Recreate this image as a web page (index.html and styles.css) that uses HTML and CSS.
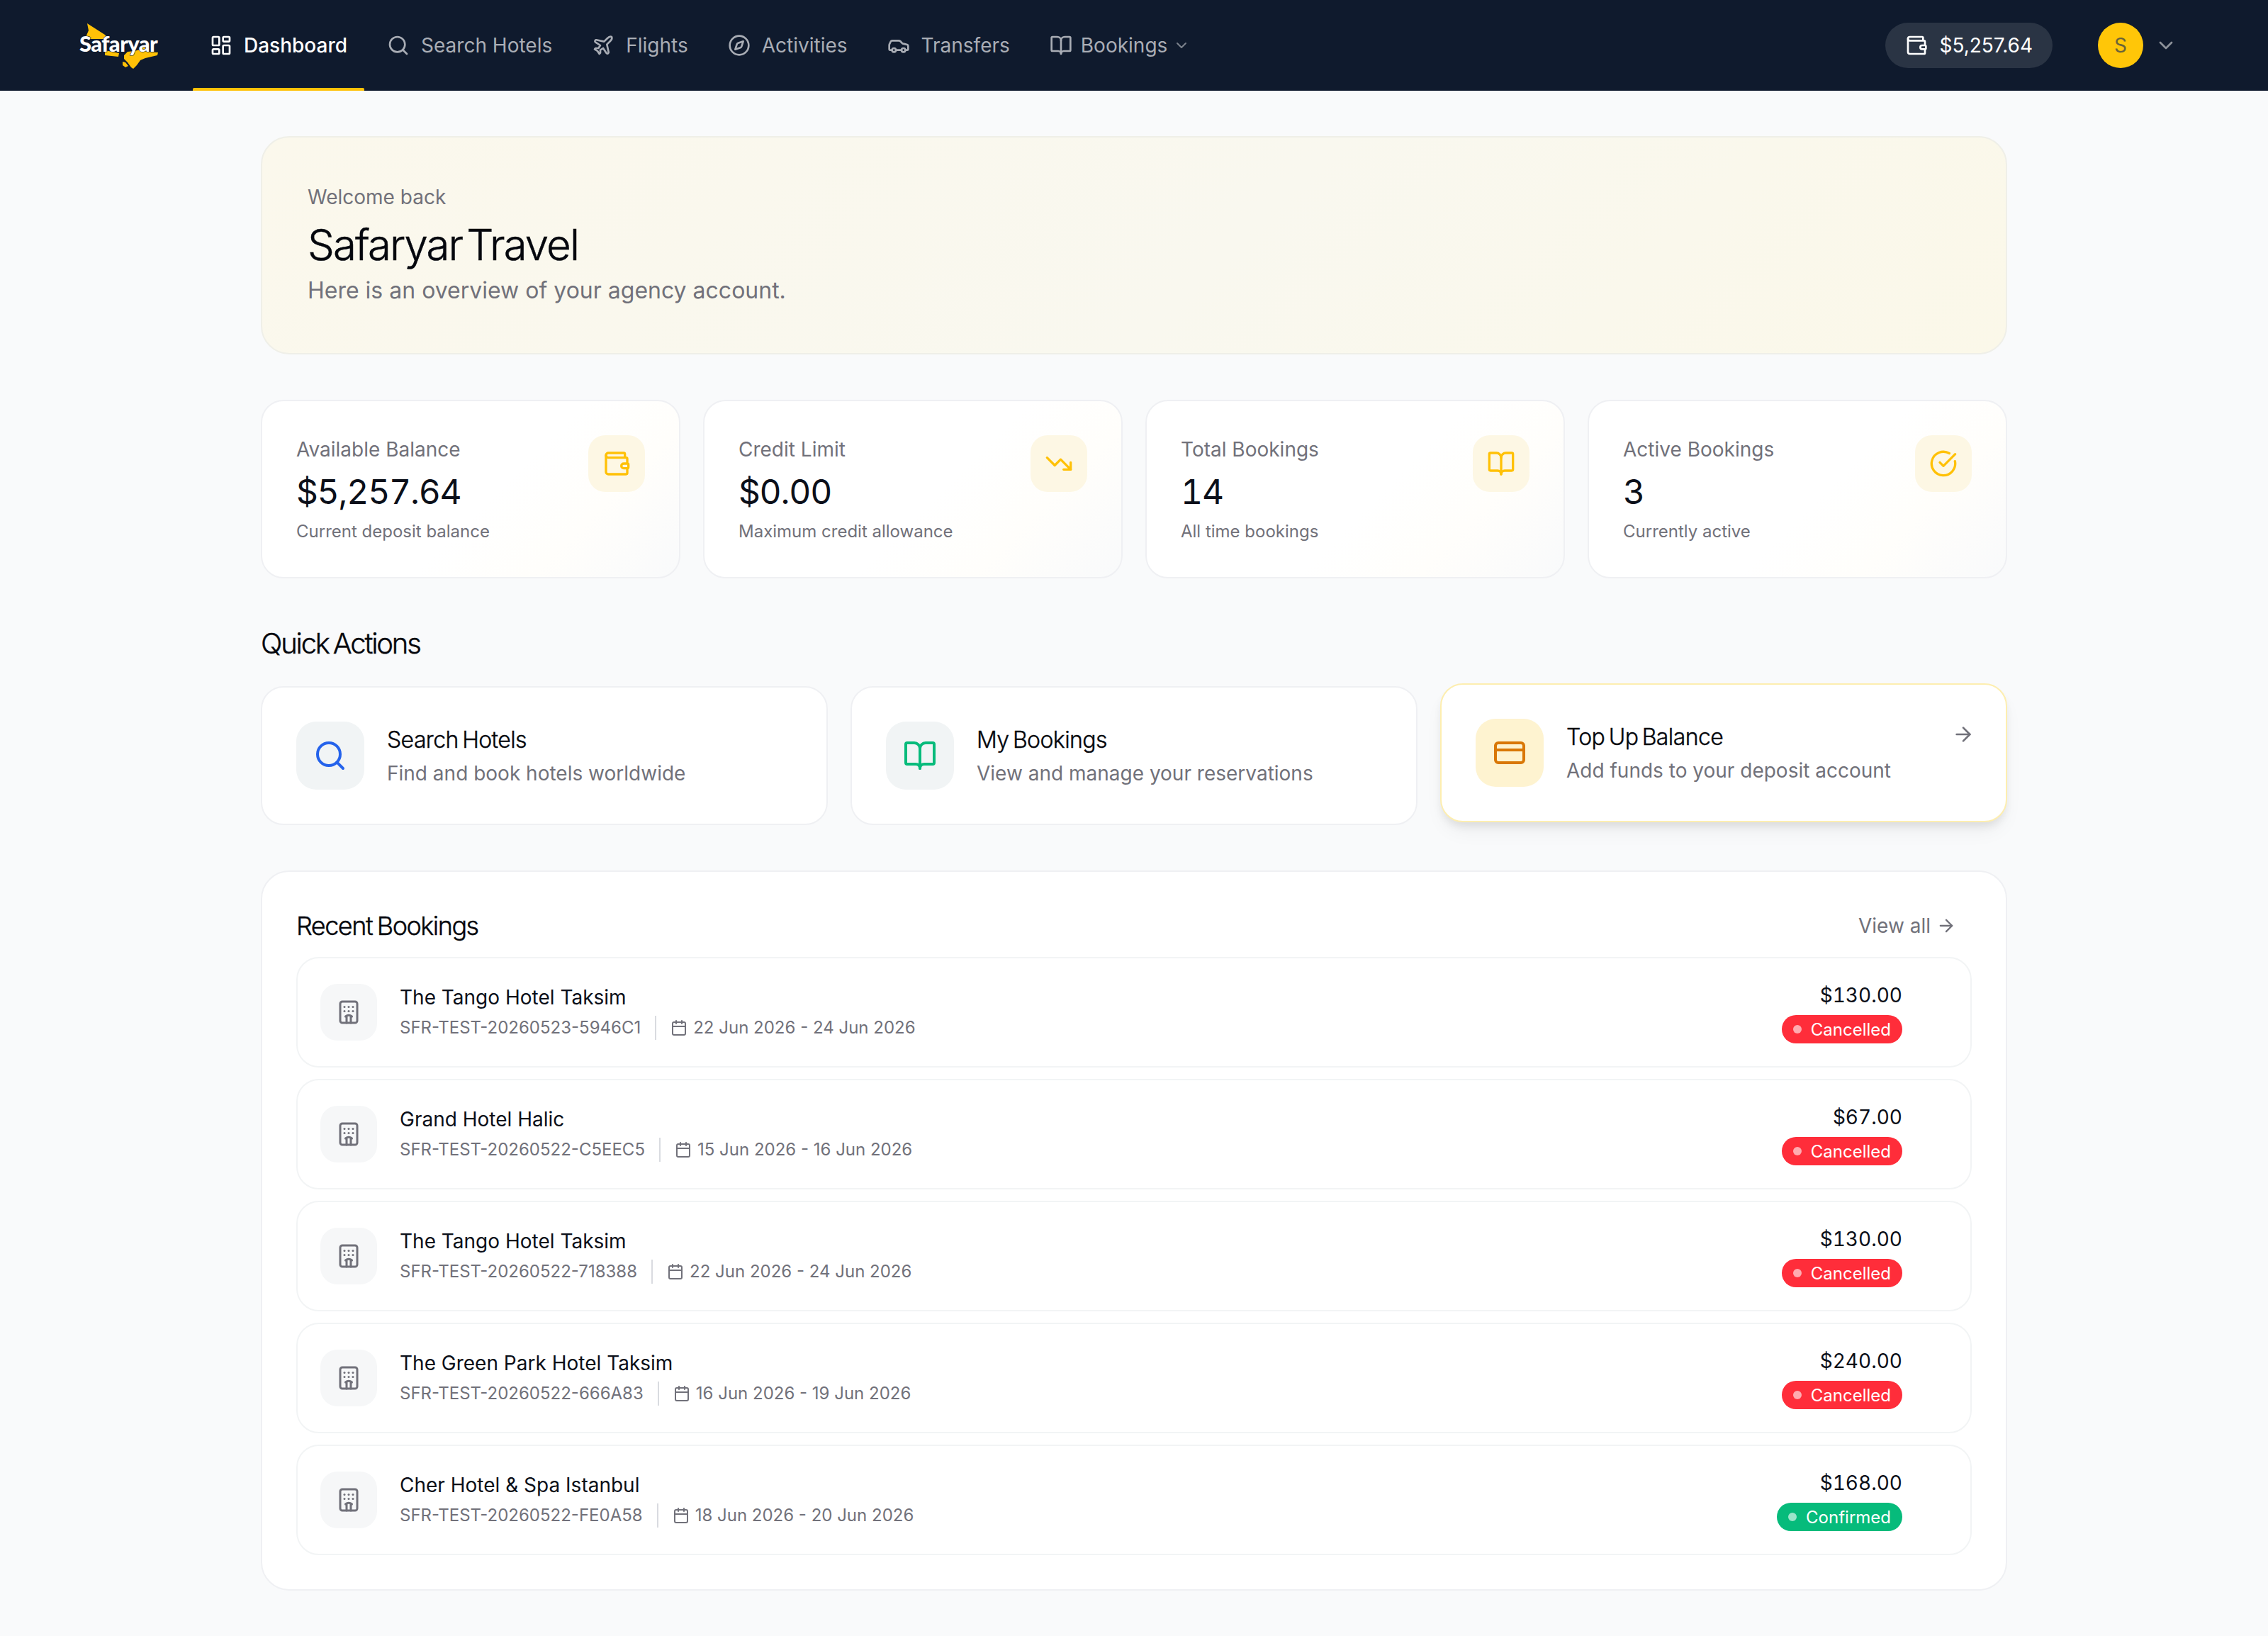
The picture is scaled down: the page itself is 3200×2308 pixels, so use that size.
FILE: index.html
```html
<!DOCTYPE html>
<html lang="en">
<head>
  <meta charset="UTF-8" />
  <title>Safaryar Dashboard</title>
  <link rel="stylesheet" href="styles.css">
</head>
<body>
  <svg class="icon-defs" xmlns="http://www.w3.org/2000/svg">
    <symbol id="i-dashboard" viewBox="0 0 24 24"><rect x="3" y="3" width="7" height="9" rx="1"/><rect x="14" y="3" width="7" height="5" rx="1"/><rect x="14" y="12" width="7" height="9" rx="1"/><rect x="3" y="16" width="7" height="5" rx="1"/></symbol>
    <symbol id="i-search" viewBox="0 0 24 24"><circle cx="11" cy="11" r="8"/><path d="m21 21-4.3-4.3"/></symbol>
    <symbol id="i-plane" viewBox="0 0 24 24"><path d="M17.8 19.2 16 11l3.5-3.5C21 6 21.5 4 21 3c-1-.5-3 0-4.5 1.5L13 8 4.8 6.2c-.5-.1-.9.1-1.1.5l-.3.5c-.2.5-.1 1 .3 1.3L9 12l-2 3H4l-1 1 3 2 2 3 1-1v-3l3-2 3.5 5.3c.3.4.8.5 1.3.3l.5-.2c.4-.3.6-.7.5-1.2z"/></symbol>
    <symbol id="i-compass" viewBox="0 0 24 24"><circle cx="12" cy="12" r="10"/><path d="m16.24 7.76-1.804 5.411a2 2 0 0 1-1.265 1.265L7.76 16.24l1.804-5.411a2 2 0 0 1 1.265-1.265z"/></symbol>
    <symbol id="i-car" viewBox="0 0 24 24"><path d="M19 17h2c.6 0 1-.4 1-1v-3c0-.9-.7-1.7-1.5-1.9C18.7 10.6 16 10 16 10s-1.3-1.4-2.2-2.3c-.5-.4-1.1-.7-1.8-.7H5c-.6 0-1.1.4-1.4.9l-1.4 2.9A3.7 3.7 0 0 0 2 12v4c0 .6.4 1 1 1h2"/><circle cx="7" cy="17" r="2"/><path d="M9 17h6"/><circle cx="17" cy="17" r="2"/></symbol>
    <symbol id="i-book" viewBox="0 0 24 24"><path d="M12 7v14"/><path d="M3 18a1 1 0 0 1-1-1V4a1 1 0 0 1 1-1h5a4 4 0 0 1 4 4 4 4 0 0 1 4-4h5a1 1 0 0 1 1 1v13a1 1 0 0 1-1 1h-6a3 3 0 0 0-3 3 3 3 0 0 0-3-3z"/></symbol>
    <symbol id="i-chevron" viewBox="0 0 24 24"><path d="m6 9 6 6 6-6"/></symbol>
    <symbol id="i-wallet" viewBox="0 0 24 24"><path d="M19 7V4a1 1 0 0 0-1-1H5a2 2 0 0 0 0 4h15a1 1 0 0 1 1 1v4h-3a2 2 0 0 0 0 4h3a1 1 0 0 0 1-1v-2a1 1 0 0 0-1-1"/><path d="M3 5v14a2 2 0 0 0 2 2h15a1 1 0 0 0 1-1v-4"/></symbol>
    <symbol id="i-trending" viewBox="0 0 24 24"><path d="M16 17h6v-6"/><path d="m22 17-8.5-8.5-5 5L2 7"/></symbol>
    <symbol id="i-check" viewBox="0 0 24 24"><path d="M21.801 10A10 10 0 1 1 17 3.335"/><path d="m9 11 3 3L22 4"/></symbol>
    <symbol id="i-card" viewBox="0 0 24 24"><rect x="2" y="5" width="20" height="14" rx="2"/><line x1="2" y1="10" x2="22" y2="10"/></symbol>
    <symbol id="i-arrow" viewBox="0 0 24 24"><path d="M5 12h14"/><path d="m12 5 7 7-7 7"/></symbol>
    <symbol id="i-hotel" viewBox="0 0 24 24"><path d="M10 22v-6.57"/><path d="M12 11h.01"/><path d="M12 7h.01"/><path d="M14 15.43V22"/><path d="M15 16a5 5 0 0 0-6 0"/><path d="M16 11h.01"/><path d="M16 7h.01"/><path d="M8 11h.01"/><path d="M8 7h.01"/><rect x="4" y="2" width="16" height="20" rx="2"/></symbol>
    <symbol id="i-calendar" viewBox="0 0 24 24"><path d="M8 2v4"/><path d="M16 2v4"/><rect x="3" y="4" width="18" height="18" rx="2"/><path d="M3 10h18"/></symbol>
  </svg>

  <header class="topbar">
    <svg class="logo" viewBox="0 -2 113 66" xmlns="http://www.w3.org/2000/svg">
      <path class="logo-wing" d="M11 0 L36 16 L41 22 L10 22 L10 17 L13 10 Z"/>
      <path class="logo-wing" d="M36 38 L56 42 L55 47 L36 45 Z"/>
      <path class="logo-wing" d="M63 45 L68 40 L78 39 L85 37 L93 30 L95 40 L111 41 L110 45 L93 49 L86 52 L81 59 L76 64 L73 62 L68 55 L63 50 Z"/>
      <path class="logo-wing" d="M61 54 L65 55 L69 60 L65 62 L61 59 Z"/>
      <text class="logo-text" x="0" y="40">Safaryar</text>
    </svg>
    <nav class="nav">
      <a class="nav-item active"><svg class="icon"><use href="#i-dashboard"/></svg>Dashboard</a>
      <a class="nav-item"><svg class="icon"><use href="#i-search"/></svg>Search Hotels</a>
      <a class="nav-item"><svg class="icon"><use href="#i-plane"/></svg>Flights</a>
      <a class="nav-item"><svg class="icon"><use href="#i-compass"/></svg>Activities</a>
      <a class="nav-item"><svg class="icon"><use href="#i-car"/></svg>Transfers</a>
      <a class="nav-item"><svg class="icon"><use href="#i-book"/></svg>Bookings<svg class="icon icon-sm"><use href="#i-chevron"/></svg></a>
    </nav>
    <div class="topbar-right">
      <div class="balance-pill"><svg class="icon"><use href="#i-wallet"/></svg>$5,257.64</div>
      <div class="avatar">S</div>
      <svg class="icon user-chevron"><use href="#i-chevron"/></svg>
    </div>
  </header>

  <main class="page">
    <section class="hero">
      <p class="hero-kicker">Welcome back</p>
      <h1 class="hero-title">Safaryar Travel</h1>
      <p class="hero-sub">Here is an overview of your agency account.</p>
    </section>

    <section class="stats">
      <div class="stat-card">
        <div>
          <div class="stat-label">Available Balance</div>
          <div class="stat-value">$5,257.64</div>
          <div class="stat-note">Current deposit balance</div>
        </div>
        <div class="stat-icon"><svg class="icon"><use href="#i-wallet"/></svg></div>
      </div>
      <div class="stat-card">
        <div>
          <div class="stat-label">Credit Limit</div>
          <div class="stat-value">$0.00</div>
          <div class="stat-note">Maximum credit allowance</div>
        </div>
        <div class="stat-icon"><svg class="icon"><use href="#i-trending"/></svg></div>
      </div>
      <div class="stat-card">
        <div>
          <div class="stat-label">Total Bookings</div>
          <div class="stat-value">14</div>
          <div class="stat-note">All time bookings</div>
        </div>
        <div class="stat-icon"><svg class="icon"><use href="#i-book"/></svg></div>
      </div>
      <div class="stat-card">
        <div>
          <div class="stat-label">Active Bookings</div>
          <div class="stat-value">3</div>
          <div class="stat-note">Currently active</div>
        </div>
        <div class="stat-icon"><svg class="icon"><use href="#i-check"/></svg></div>
      </div>
    </section>

    <h2 class="section-title">Quick Actions</h2>
    <section class="actions">
      <a class="action-card">
        <div class="action-icon blue"><svg class="icon"><use href="#i-search"/></svg></div>
        <div class="action-text">
          <div class="action-title">Search Hotels</div>
          <div class="action-sub">Find and book hotels worldwide</div>
        </div>
      </a>
      <a class="action-card">
        <div class="action-icon green"><svg class="icon"><use href="#i-book"/></svg></div>
        <div class="action-text">
          <div class="action-title">My Bookings</div>
          <div class="action-sub">View and manage your reservations</div>
        </div>
      </a>
      <a class="action-card raised">
        <div class="action-icon orange"><svg class="icon"><use href="#i-card"/></svg></div>
        <div class="action-text">
          <div class="action-title">Top Up Balance</div>
          <div class="action-sub">Add funds to your deposit account</div>
        </div>
        <svg class="icon action-arrow"><use href="#i-arrow"/></svg>
      </a>
    </section>

    <section class="recent">
      <div class="recent-head">
        <h2 class="recent-title">Recent Bookings</h2>
        <a class="view-all">View all<svg class="icon"><use href="#i-arrow"/></svg></a>
      </div>
      <div class="booking-list">
        <div class="booking">
          <div class="booking-icon"><svg class="icon"><use href="#i-hotel"/></svg></div>
          <div class="booking-info">
            <div class="booking-name">The Tango Hotel Taksim</div>
            <div class="booking-meta"><span>SFR-TEST-20260523-5946C1</span><i class="divider"></i><svg class="icon"><use href="#i-calendar"/></svg><span>22 Jun 2026 - 24 Jun 2026</span></div>
          </div>
          <div class="booking-side">
            <div class="booking-price">$130.00</div>
            <div class="badge cancelled"><i class="dot"></i>Cancelled</div>
          </div>
        </div>
        <div class="booking">
          <div class="booking-icon"><svg class="icon"><use href="#i-hotel"/></svg></div>
          <div class="booking-info">
            <div class="booking-name">Grand Hotel Halic</div>
            <div class="booking-meta"><span>SFR-TEST-20260522-C5EEC5</span><i class="divider"></i><svg class="icon"><use href="#i-calendar"/></svg><span>15 Jun 2026 - 16 Jun 2026</span></div>
          </div>
          <div class="booking-side">
            <div class="booking-price">$67.00</div>
            <div class="badge cancelled"><i class="dot"></i>Cancelled</div>
          </div>
        </div>
        <div class="booking">
          <div class="booking-icon"><svg class="icon"><use href="#i-hotel"/></svg></div>
          <div class="booking-info">
            <div class="booking-name">The Tango Hotel Taksim</div>
            <div class="booking-meta"><span>SFR-TEST-20260522-718388</span><i class="divider"></i><svg class="icon"><use href="#i-calendar"/></svg><span>22 Jun 2026 - 24 Jun 2026</span></div>
          </div>
          <div class="booking-side">
            <div class="booking-price">$130.00</div>
            <div class="badge cancelled"><i class="dot"></i>Cancelled</div>
          </div>
        </div>
        <div class="booking">
          <div class="booking-icon"><svg class="icon"><use href="#i-hotel"/></svg></div>
          <div class="booking-info">
            <div class="booking-name">The Green Park Hotel Taksim</div>
            <div class="booking-meta"><span>SFR-TEST-20260522-666A83</span><i class="divider"></i><svg class="icon"><use href="#i-calendar"/></svg><span>16 Jun 2026 - 19 Jun 2026</span></div>
          </div>
          <div class="booking-side">
            <div class="booking-price">$240.00</div>
            <div class="badge cancelled"><i class="dot"></i>Cancelled</div>
          </div>
        </div>
        <div class="booking">
          <div class="booking-icon"><svg class="icon"><use href="#i-hotel"/></svg></div>
          <div class="booking-info">
            <div class="booking-name">Cher Hotel &amp; Spa Istanbul</div>
            <div class="booking-meta"><span>SFR-TEST-20260522-FE0A58</span><i class="divider"></i><svg class="icon"><use href="#i-calendar"/></svg><span>18 Jun 2026 - 20 Jun 2026</span></div>
          </div>
          <div class="booking-side">
            <div class="booking-price">$168.00</div>
            <div class="badge confirmed"><i class="dot"></i>Confirmed</div>
          </div>
        </div>
      </div>
    </section>
  </main>
</body>
</html>
```

FILE: styles.css
```css
* { box-sizing: border-box; }
html, body { margin: 0; padding: 0; }
body {
  background: #f9fafb;
  color: #0b0f19;
  font-family: Inter, "Noto Sans", sans-serif;
  font-size: 28px;
  height: 2308px;
  overflow: hidden;
}
h1, h2, p { margin: 0; font-weight: 400; }
a { color: inherit; text-decoration: none; }
.icon-defs { display: none; }
.icon {
  width: 32px;
  height: 32px;
  flex: none;
  fill: none;
  stroke: currentColor;
  stroke-width: 2;
  stroke-linecap: round;
  stroke-linejoin: round;
}

/* top bar */
.topbar {
  height: 128px;
  background: #0f1a2d;
  display: flex;
  align-items: center;
  padding: 0 128px 0 112px;
}
.logo { width: 113px; height: 66px; flex: none; margin-right: 47px; overflow: visible; }
.logo-wing { fill: #ffc107; }
.logo-text { fill: #fff; font-family: Lato, sans-serif; font-weight: 900; font-size: 31px; letter-spacing: -0.6px; stroke: #0f1a2d; stroke-width: 1.2px; paint-order: stroke; }
.nav { display: flex; height: 100%; gap: 8px; }
.nav-item {
  position: relative;
  display: flex;
  align-items: center;
  gap: 16px;
  padding: 0 24px;
  color: #a9adb5;
}
.nav-item:last-child { gap: 12px; }
.nav-item.active { color: #fff; font-weight: 500; }
.nav-item.active::after {
  content: "";
  position: absolute;
  left: 0;
  right: 0;
  bottom: 0;
  height: 4px;
  border-radius: 2px 2px 0 0;
  background: #ffc107;
}
.icon-sm { width: 24px; height: 24px; margin-left: -4px; color: #7d838d; }
.topbar-right { margin-left: auto; display: flex; align-items: center; }
.balance-pill {
  height: 64px;
  padding: 0 28px;
  border-radius: 32px;
  background: #2a3444;
  color: #fff;
  display: flex;
  align-items: center;
  gap: 16px;
}
.avatar {
  width: 64px;
  height: 64px;
  margin-left: 64px;
  border-radius: 50%;
  background: #ffc608;
  color: #6a6338;
  display: flex;
  align-items: center;
  justify-content: center;
}
.user-chevron { margin-left: 16px; color: #8d929a; }

/* page */
.page { width: 2464px; margin: 0 auto; padding-top: 64px; }
.hero {
  height: 308px;
  padding: 64px;
  border: 2px solid #efefe8;
  border-radius: 40px;
  background: linear-gradient(135deg, #fbf8ec, #f9f8ef 55%, #fbf8e9);
  margin-bottom: 64px;
}
.hero-kicker { line-height: 40px; color: #71717a; }
.hero-title { font-size: 60px; font-weight: 300; color: #05070d; -webkit-text-stroke: 0.5px #05070d; line-height: 72px; margin: 11px 0 5px; letter-spacing: -1.9px; word-spacing: -9px; }
.hero-sub { font-size: 32px; line-height: 48px; color: #71717a; }

.stats { display: grid; grid-template-columns: repeat(4, 1fr); gap: 32px; }
.stat-card {
  height: 252px;
  padding: 48px;
  border: 2px solid #eff0f3;
  border-radius: 32px;
  background: linear-gradient(135deg, #fff 55%, #fffefb 75%, #f9fafb);
  display: flex;
  justify-content: space-between;
}
.stat-label { line-height: 40px; color: #71717a; }
.stat-value { font-size: 48px; line-height: 64px; margin: 8px 0; font-variant-numeric: tabular-nums; letter-spacing: -1.2px; }
.stat-note { font-size: 24px; line-height: 32px; color: #71717a; }
.stat-icon {
  width: 80px;
  height: 80px;
  border-radius: 24px;
  background: #fdf7e4;
  color: #ffc107;
  display: flex;
  align-items: center;
  justify-content: center;
}
.stat-icon .icon { width: 40px; height: 40px; }

.section-title { font-size: 40px; font-weight: 300; color: #05070d; -webkit-text-stroke: 0.4px #05070d; line-height: 56px; margin: 64px 0 32px; letter-spacing: -2.2px; word-spacing: -3px; }
.actions { display: grid; grid-template-columns: repeat(3, 1fr); gap: 32px; margin-bottom: 64px; }
.action-card {
  height: 196px;
  padding: 48px;
  border: 2px solid #eff0f3;
  border-radius: 32px;
  background: #fff;
  display: flex;
  align-items: center;
  gap: 32px;
}
.action-card.raised {
  border-color: #fdeeb0;
  transform: translateY(-4px);
  box-shadow: 0 8px 12px -2px rgba(0,0,0,0.08), 0 16px 30px -6px rgba(0,0,0,0.06);
}
.action-icon {
  width: 96px;
  height: 96px;
  flex: none;
  border-radius: 28px;
  background: #f1f4f5;
  display: flex;
  align-items: center;
  justify-content: center;
}
.action-icon .icon { width: 48px; height: 48px; }
.action-icon.blue { color: #2563eb; }
.action-icon.green { color: #06bb7b; }
.action-icon.orange { color: #d97706; background: #fef3d0; }
.action-text { flex: 1; }
.action-title { font-size: 32px; font-weight: 300; color: #05070d; -webkit-text-stroke: 0.4px #05070d; line-height: 48px; letter-spacing: -0.6px; word-spacing: -3px; margin-bottom: 2px; }
.action-sub { line-height: 42px; color: #71717a; }
.action-arrow { align-self: flex-start; margin: 6px -4px 0 0; color: #71717a; }

/* recent bookings */
.recent {
  padding: 48px;
  border: 2px solid #eff0f3;
  border-radius: 40px;
  background: #fff;
}
.recent-head { display: flex; align-items: center; justify-content: space-between; margin-bottom: 16px; height: 56px; }
.recent-title { font-size: 36px; font-weight: 300; color: #05070d; -webkit-text-stroke: 0.4px #05070d; line-height: 56px; letter-spacing: -1.5px; word-spacing: -2px; }
.view-all { display: flex; align-items: center; gap: 8px; padding-right: 22px; color: #71717a; }
.view-all .icon { width: 28px; height: 28px; }
.booking-list { display: flex; flex-direction: column; gap: 16px; }
.booking {
  height: 156px;
  padding: 0 96px 0 32px;
  border: 2px solid #f2f4f5;
  border-radius: 32px;
  display: flex;
  align-items: center;
  gap: 32px;
}
.booking-icon {
  width: 80px;
  height: 80px;
  flex: none;
  border-radius: 24px;
  background: #f6f7f8;
  color: #71717a;
  display: flex;
  align-items: center;
  justify-content: center;
}
.booking-icon .icon { width: 36px; height: 36px; }
.booking-info { flex: 1; padding-bottom: 3px; }
.booking-name { line-height: 40px; margin-bottom: 6px; }
.booking-meta { display: flex; align-items: center; height: 34px; font-size: 24px; color: #71717a; }
.booking-meta .icon { width: 24px; height: 24px; margin-right: 8px; }
.divider { width: 2px; height: 34px; background: #d9dbe0; margin: 0 20px; }
.booking-side { display: flex; flex-direction: column; align-items: flex-end; gap: 8px; }
.booking-price { line-height: 40px; font-variant-numeric: tabular-nums; }
.badge {
  height: 40px;
  padding: 0 16px;
  border-radius: 20px;
  color: #fff;
  font-size: 24px;
  display: flex;
  align-items: center;
  gap: 13px;
}
.badge .dot { width: 12px; height: 12px; border-radius: 50%; background: rgba(255,255,255,0.6); }
.badge.cancelled { background: #ff2d3a; }
.badge.confirmed { background: #06bb7b; }
```
